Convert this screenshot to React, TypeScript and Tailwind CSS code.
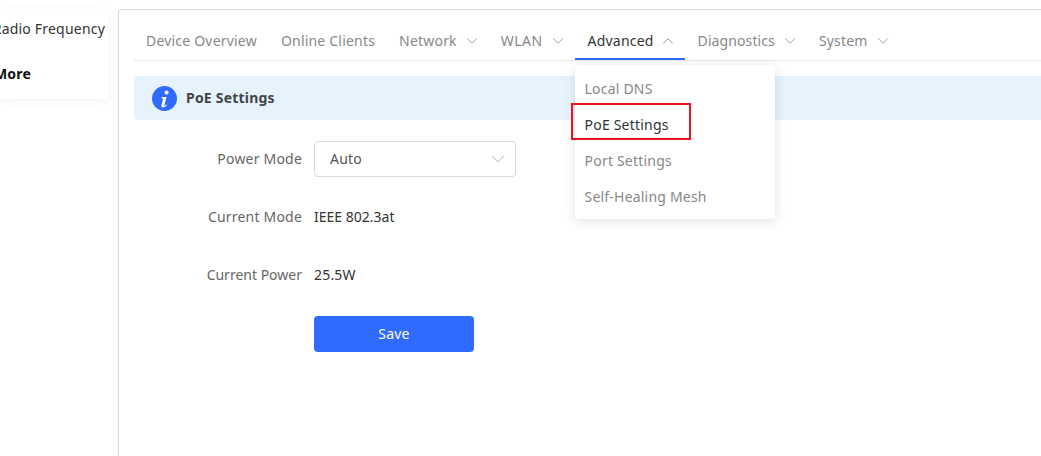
import { ChevronDown, ChevronUp } from "lucide-react";

const tabs = [
  { label: "Device Overview", fit: "px-[12px]" },
  { label: "Online Clients", fit: "px-[12px]" },
  { label: "Network", caret: true, fit: "px-[12px]" },
  { label: "WLAN", caret: true, fit: "px-[12px] tracking-[0.45px]" },
  { label: "Advanced", caret: true, active: true, fit: "pl-[13px] pr-[12px]" },
  { label: "Diagnostics", caret: true, fit: "ml-[1px] px-[12px] tracking-[0.1px]" },
  { label: "System", caret: true, fit: "px-[12px]" },
];

const menuItems = ["Local DNS", "PoE Settings", "Port Settings", "Self-Healing Mesh"];

function InfoIcon() {
  return (
    <svg width="25" height="25" viewBox="0 0 25 25" className="shrink-0">
      <circle cx="12.5" cy="12.5" r="12.5" fill="#2f6bff" />
      <circle cx="14.6" cy="6.4" r="2" fill="#fff" />
      <path d="M9.6 11h5l-2.3 8.2c-.1.5.4.7.8.4l1.3-1 .4.6c-1.1 1.3-2.4 2.2-3.8 2.2-1.3 0-2-.8-1.6-2.2l1.6-6c.1-.6-.3-.9-1.5-.9z" fill="#fff" />
    </svg>
  );
}

export default function App() {
  return (
    <div className="flex h-[456px] w-[1041px] overflow-hidden bg-white font-['Noto_Sans',sans-serif] text-[14px] tracking-[0.2px]">
      {/* Sidebar, cut off at the left edge */}
      <aside className="w-[118px] shrink-0 pt-[9px]">
        <div className="flex h-[90px] w-[108px] flex-col overflow-hidden rounded-[3px] bg-white pt-[10px] shadow-[0_2px_10px_rgba(0,0,0,0.05)]">
          <div className="flex h-[20px] justify-end whitespace-nowrap pr-[3px] leading-[20px] text-[#333]">Radio Frequency</div>
          <div className="mt-[25px] flex h-[20px] justify-end whitespace-nowrap pr-[77px] font-bold leading-[20px] text-[#111]">More</div>
        </div>
      </aside>

      <main className="mt-[9px] flex-1 rounded-tl-[4px] border-l border-t border-[#d9d9d9] pl-[15px]">
        {/* Tabs */}
        <nav className="relative flex h-[51px] items-end border-b border-[#e5e5e5]">
          {tabs.map((tab) => (
            <div
              key={tab.label}
              className={`relative flex h-[50px] items-center pt-[11px] ${tab.fit} ${tab.active ? "text-[#333]" : "text-[#888]"}`}
            >
              <span className="whitespace-nowrap">{tab.label}</span>
              {tab.caret &&
                (tab.active ? (
                  <ChevronUp size={18} strokeWidth={1.25} className="ml-[5px] -mr-[4px] text-[#888]" />
                ) : (
                  <ChevronDown size={18} strokeWidth={1.25} className="ml-[6px] -mr-[4px] text-[#999]" />
                ))}
              {tab.active && (
                <>
                  <div className="absolute bottom-0 left-0 right-0 h-[2px] bg-[#2f6bff]" />
                  <div className="absolute left-0 top-[55px] z-10 w-[200px] rounded-[3px] bg-white py-[5px] shadow-[0_2px_12px_rgba(0,0,0,0.12)]">
                    {menuItems.map((item) => (
                      <div
                        key={item}
                        className={`flex h-[36px] items-center px-[10px] ${item === "PoE Settings" ? "text-[#333]" : "text-[#888]"}`}
                      >
                        {item}
                      </div>
                    ))}
                    {/* red annotation box */}
                    <div className="absolute left-[-4px] top-[38px] h-[37px] w-[120px] border-2 border-[#e8141f]" />
                  </div>
                </>
              )}
            </div>
          ))}
        </nav>

        {/* Title bar */}
        <div className="mt-[15px] flex h-[44px] w-[907px] items-center gap-[9px] rounded-l-[4px] bg-[#e6f3fd] pl-[18px]">
          <InfoIcon />
          <span className="pb-[2px] font-bold text-[#444]">PoE Settings</span>
        </div>

        {/* Form */}
        <div className="mt-[21px] flex flex-col">
          <div className="flex h-[36px] items-center">
            <label className="w-[168px] pb-[2px] text-right text-[#666]">Power Mode</label>
            <div className="ml-[12px] flex h-[36px] w-[202px] items-center justify-between rounded-[4px] border border-[#d9d9d9] pb-[2px] pl-[15px] pr-[6px] text-[#555]">
              <span>Auto</span>
              <ChevronDown size={22} strokeWidth={1} className="mt-[2px] text-[#aaa]" />
            </div>
          </div>
          <div className="mt-[22px] flex h-[36px] items-center pb-[2px]">
            <label className="w-[168px] text-right text-[#666]">Current Mode</label>
            <span className="ml-[12px] tracking-normal text-[#333]">IEEE 802.3at</span>
          </div>
          <div className="mt-[22px] flex h-[36px] items-center pb-[2px]">
            <label className="w-[168px] text-right tracking-normal text-[#666]">Current Power</label>
            <span className="ml-[12px] text-[#333]">25.5W</span>
          </div>
          <button className="ml-[180px] mt-[23px] h-[36px] w-[160px] rounded-[4px] bg-[#2f6bff] pb-[2px] text-white">Save</button>
        </div>
      </main>
    </div>
  );
}
